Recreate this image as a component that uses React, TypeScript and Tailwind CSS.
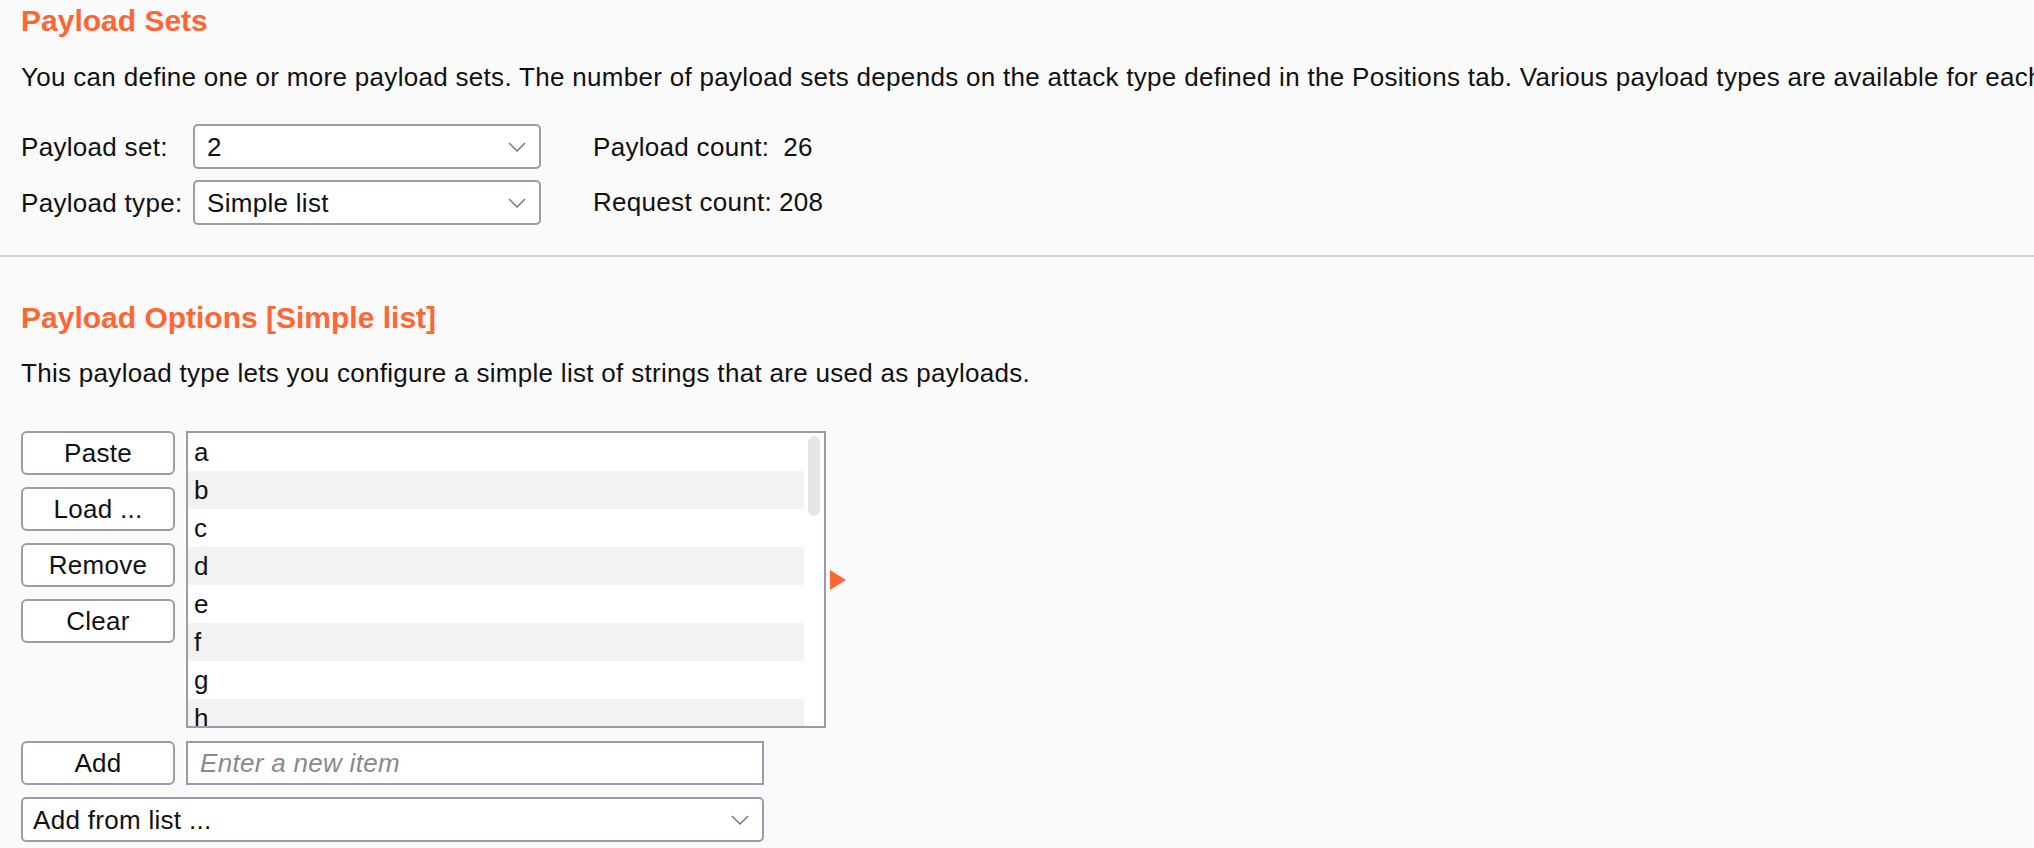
import React from "react";

const items = ["a", "b", "c", "d", "e", "f", "g", "h", "i", "j"];

const Chevron: React.FC = () => (
  <svg width="18" height="10" viewBox="0 0 18 10" className="shrink-0">
    <polyline points="1,1 9,9 17,1" fill="none" stroke="#7a7a7a" strokeWidth="1.5" />
  </svg>
);

const Select: React.FC<{ value: string; className?: string }> = ({ value, className }) => (
  <div
    className={
      "flex items-center justify-between h-[45px] bg-white border-2 border-[#9e9aab] rounded-[5px] pl-[12px] pr-[13px] leading-[32px] " +
      (className ?? "")
    }
  >
    <span>{value}</span>
    <Chevron />
  </div>
);

const Button: React.FC<{ label: string }> = ({ label }) => (
  <button className="w-[154px] h-[44px] bg-white border-2 border-[#9e9aab] rounded-[6px] text-[26px] leading-[32px] text-[#111] tracking-[0.3px]">
    {label}
  </button>
);

export default function App() {
  return (
    <div
      className="w-[2034px] h-[848px] overflow-hidden bg-[#fafafa] text-[26px] text-[#111] tracking-[0.3px]"
      style={{ fontFamily: '"Liberation Sans", Arial, sans-serif' }}
    >
      {/* Payload Sets */}
      <section className="pl-[21px] pt-[3px] pb-[30px]">
        <h2 className="text-[30px] leading-[36px] font-bold text-[#ff6633] tracking-normal">Payload Sets</h2>
        <p className="mt-[22px] leading-[32px] whitespace-nowrap">
          You can define one or more payload sets. The number of payload sets depends on the attack type defined in the Positions tab. Various payload types are available for each payload set
        </p>
        <div className="mt-[31px] flex items-start">
          <div className="flex flex-col gap-[11px]">
            <div className="flex items-center">
              <span className="w-[172px] leading-[32px]">Payload set:</span>
              <Select value="2" className="w-[348px]" />
            </div>
            <div className="flex items-center">
              <span className="w-[172px] leading-[32px]">Payload type:</span>
              <Select value="Simple list" className="w-[348px] h-[44px]" />
            </div>
          </div>
          <div className="ml-[52px] flex flex-col gap-[11px]">
            <div className="h-[45px] flex items-center leading-[32px]">
              Payload count:<span className="ml-[14px]">26</span>
            </div>
            <div className="h-[44px] flex items-center leading-[32px]">
              Request count:<span className="ml-[7px]">208</span>
            </div>
          </div>
        </div>
      </section>

      <div className="h-[2px] bg-[#d6d6d6]" />

      {/* Payload Options */}
      <section className="pl-[21px] pt-[43px]">
        <h2 className="text-[30px] leading-[36px] font-bold text-[#ff6633] tracking-normal">
          Payload Options [Simple list]
        </h2>
        <p className="mt-[21px] leading-[32px] whitespace-nowrap">
          This payload type lets you configure a simple list of strings that are used as payloads.
        </p>

        <div className="mt-[42px] flex items-start gap-[11px]">
          <div className="flex flex-col gap-[12px]">
            <Button label="Paste" />
            <Button label="Load ..." />
            <Button label="Remove" />
            <Button label="Clear" />
          </div>
          <div className="flex items-center gap-[4px]">
            <div className="w-[640px] h-[297px] bg-white border-2 border-[#9e9aab] flex overflow-hidden">
              <div className="w-[616px] flex flex-col overflow-hidden">
                {items.map((it, i) => (
                  <div
                    key={it}
                    className={
                      "h-[38px] shrink-0 pl-[6px] leading-[38px] " + (i % 2 === 1 ? "bg-[#f2f2f2]" : "bg-white")
                    }
                  >
                    {it}
                  </div>
                ))}
              </div>
              <div className="flex-1 pt-[3px] pl-[4px] pr-[4px]">
                <div className="w-[12px] h-[80px] rounded-full bg-[#e6e6e6]" />
              </div>
            </div>
            <svg width="16" height="20" viewBox="0 0 16 20">
              <polygon points="0,0 16,10 0,20" fill="#ff6633" />
            </svg>
          </div>
        </div>

        <div className="mt-[13px] flex items-center gap-[11px]">
          <Button label="Add" />
          <div className="w-[578px] h-[44px] bg-white border-2 border-[#9e9aab] pl-[12px] flex items-center">
            <span className="italic text-[#8a8a8a] leading-[32px]">Enter a new item</span>
          </div>
        </div>

        <Select value="Add from list ..." className="mt-[12px] w-[743px] h-[44px] !pl-[10px]" />
      </section>
    </div>
  );
}
